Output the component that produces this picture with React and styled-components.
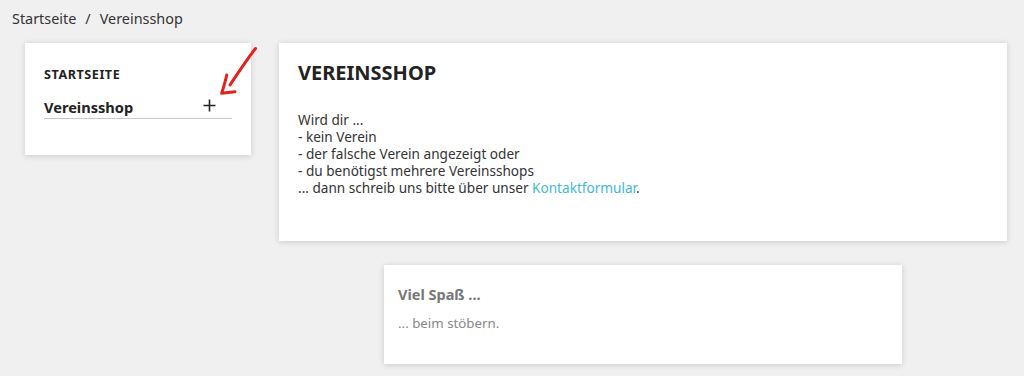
import React from 'react';
import styled, { createGlobalStyle } from 'styled-components';

const GlobalStyle = createGlobalStyle`
  html, body {
    margin: 0;
    padding: 0;
    background: #f0f0f0;
    font-family: 'Noto Sans', 'Open Sans', sans-serif;
    color: #333;
  }
`;

const Page = styled.div`
  position: relative;
  width: 1024px;
  height: 376px;
  overflow: hidden;
`;

const Breadcrumb = styled.nav`
  font-size: 14.4px;
  line-height: 20px;
  padding: 9px 12px 14px;
  color: #333;

  .sep {
    margin: 0 9px;
  }
`;

const Row = styled.div`
  display: flex;
  align-items: flex-start;
  gap: 28px;
  padding: 0 17px 0 25px;
`;

const Card = styled.div`
  background: #fff;
  box-shadow: 0 1px 6px rgba(0, 0, 0, 0.16);
`;

const Sidebar = styled(Card)`
  width: 226px;
  box-sizing: border-box;
  padding: 23px 19px 36px;
`;

const SideTitle = styled.div`
  font-size: 12.6px;
  line-height: 17px;
  letter-spacing: 0.55px;
  font-weight: 700;
  text-transform: uppercase;
  color: #222;
  margin-bottom: 14px;
`;

const SideItem = styled.div`
  display: flex;
  justify-content: space-between;
  align-items: center;
  padding-bottom: 1px;
  border-bottom: 1px solid #c8c8c8;
  font-size: 14.6px;
  line-height: 20px;
  font-weight: 700;
  color: #222;
`;

const PlusIcon = styled.svg`
  width: 13px;
  height: 13px;
  margin-right: 16px;
  margin-top: -3px;
`;

const MainColumn = styled.div`
  flex: 1;
  display: flex;
  flex-direction: column;
`;

const MainCard = styled(Card)`
  height: 198px;
  box-sizing: border-box;
  padding: 16px 19px;
`;

const Heading = styled.h1`
  margin: 0 0 25px;
  font-size: 20px;
  font-weight: 700;
  color: #222;
`;

const Text = styled.p`
  margin: 0;
  font-size: 13.6px;
  line-height: 17px;
  color: #333;

  a {
    color: #3fbad2;
    text-decoration: none;
  }
`;

const InfoCard = styled(Card)`
  align-self: center;
  width: 518px;
  height: 99px;
  box-sizing: border-box;
  margin-top: 24px;
  padding: 19px 14px;
`;

const InfoTitle = styled.div`
  font-size: 14.5px;
  font-weight: 700;
  color: #777;
  margin-bottom: 10px;
`;

const InfoText = styled.div`
  font-size: 13.3px;
  color: #888;
`;

const Arrow = styled.svg`
  position: absolute;
  left: 210px;
  top: 40px;
  width: 60px;
  height: 64px;
  pointer-events: none;
`;

export default function App() {
  return (
    <Page>
      <GlobalStyle />
      <Breadcrumb>
        Startseite<span className="sep">/</span>Vereinsshop
      </Breadcrumb>
      <Row>
        <Sidebar>
          <SideTitle>Startseite</SideTitle>
          <SideItem>
            <span>Vereinsshop</span>
            <PlusIcon viewBox="0 0 13 13">
              <path d="M6.5 0.5v12M0.5 6.5h12" stroke="#222" strokeWidth="1.6" fill="none" />
            </PlusIcon>
          </SideItem>
        </Sidebar>
        <MainColumn>
          <MainCard>
            <Heading>VEREINSSHOP</Heading>
            <Text>
              Wird dir ...<br />
              - kein Verein<br />
              - der falsche Verein angezeigt oder<br />
              - du benötigst mehrere Vereinsshops<br />
              ... dann schreib uns bitte über unser <a href="#">Kontaktformular</a>.
            </Text>
          </MainCard>
          <InfoCard>
            <InfoTitle>Viel Spaß ...</InfoTitle>
            <InfoText>... beim stöbern.</InfoText>
          </InfoCard>
        </MainColumn>
      </Row>
      <Arrow viewBox="0 0 60 64">
        <path
          d="M45.5 8.5 C38 18, 28 33, 20 45 M16.7 35 C15.5 41, 13.5 47.5, 11.7 53.3 C16 52.5, 20.5 52, 25 51.7"
          stroke="#e3211d"
          strokeWidth="3"
          strokeLinecap="round"
          strokeLinejoin="round"
          fill="none"
        />
      </Arrow>
    </Page>
  );
}
